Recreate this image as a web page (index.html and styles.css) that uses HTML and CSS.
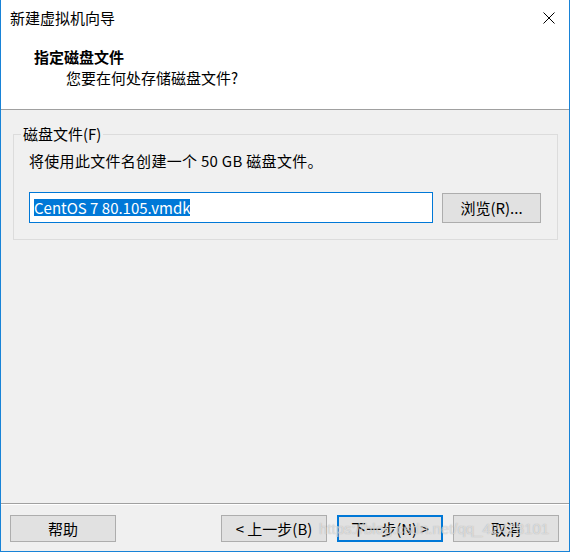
FILE: index.html
```html
<!DOCTYPE html>
<html lang="zh">
<head>
    <meta charset="UTF-8">
    <meta name="viewport" content="width=device-width, initial-scale=1.0">
    <title>新建虚拟机向导</title>
    <link rel="stylesheet" href="styles.css">
</head>
<body>
    <div class="window">
        <!-- 标题栏和页眉 -->
        <div class="header">
            <div class="titlebar">
                <span class="title">新建虚拟机向导</span>
                <button class="close-btn" title="关闭">
                    <svg width="12" height="12" viewBox="0 0 12 12">
                        <path d="M0.5 0.5 L11.5 11.5 M11.5 0.5 L0.5 11.5" stroke="#000" stroke-width="1" fill="none"/>
                    </svg>
                </button>
            </div>
            <div class="head-text">
                <div class="head-title">指定磁盘文件</div>
                <div class="head-sub">您要在何处存储磁盘文件?</div>
            </div>
        </div>

        <!-- 主体 -->
        <div class="content">
            <fieldset class="group">
                <legend>磁盘文件(F)</legend>
                <div class="hint">将使用此文件名创建一个 50 GB 磁盘文件。</div>
                <div class="file-row">
                    <div class="file-input"><span class="selected">CentOS 7 80.105.vmdk</span></div>
                    <button class="btn browse-btn">浏览(R)...</button>
                </div>
            </fieldset>
        </div>

        <!-- 底部按钮 -->
        <div class="footer">
            <button class="btn">帮助</button>
            <div class="nav-group">
                <button class="btn">&lt; 上一步(B)</button>
                <button class="btn btn-default">下一步(N) &gt;</button>
                <button class="btn">取消</button>
            </div>
        </div>

        <div class="watermark">https://blog.csdn.net/qq_42428101</div>
    </div>
</body>
</html>
```

FILE: styles.css
```css
* {
    box-sizing: border-box;
    margin: 0;
    padding: 0;
}

body {
    font-family: "Noto Sans CJK SC", "Noto Sans", sans-serif;
    font-size: 15px;
    color: #000;
    background: #f0f0f0;
}

.window {
    position: relative;
    width: 570px;
    height: 552px;
    display: flex;
    flex-direction: column;
    border: 1px solid #1883d7;
    border-top: none;
    background: #f0f0f0;
    overflow: hidden;
}

/* 页眉 */
.header {
    height: 110px;
    background: #fff;
    border-bottom: 1px solid #a0a0a0;
}

.titlebar {
    height: 36px;
    display: flex;
    align-items: center;
    justify-content: space-between;
    padding-left: 9px;
    padding-right: 14px;
}

.title {
    line-height: 20px;
}

.close-btn {
    width: 12px;
    height: 12px;
    border: none;
    background: none;
    display: flex;
}

.head-text {
    padding-top: 11px;
    line-height: 20px;
}

.head-title {
    font-weight: bold;
    padding-left: 33px;
}

.head-sub {
    padding-left: 65px;
    margin-top: 1px;
}

/* 主体 */
.content {
    flex: 1;
    padding: 14px 11px 0 12px;
}

.group {
    border: 1px solid #dcdcdc;
    padding: 7px 16px 16px 15px;
}

.group legend {
    line-height: 20px;
    padding: 0 2px;
    margin-left: -8px;
}

.hint {
    line-height: 20px;
    letter-spacing: 0.3px;
}

.file-row {
    display: flex;
    align-items: center;
    gap: 9px;
    margin-top: 21px;
}

.file-input {
    width: 404px;
    height: 31px;
    background: #fff;
    border: 1px solid #0078d7;
    padding-left: 4px;
    display: flex;
    align-items: center;
}

.selected {
    background: #0078d7;
    color: #fff;
    line-height: 17px;
}

.btn {
    width: 106px;
    height: 27px;
    background: #e1e1e1;
    border: 1px solid #adadad;
    font-family: inherit;
    font-size: 15px;
    color: #000;
}

.browse-btn {
    width: 99px;
    height: 30px;
}

.btn-default {
    border: 2px solid #0078d7;
}

/* 底部 */
.footer {
    height: 48px;
    border-top: 1px solid #a0a0a0;
    box-shadow: inset 0 1px #fff;
    display: flex;
    justify-content: space-between;
    padding: 11px 10px 0 9px;
}

.nav-group {
    display: flex;
    gap: 10px;
}

.watermark {
    position: absolute;
    left: 318px;
    top: 520px;
    font-family: "Liberation Sans", Arial, sans-serif;
    font-size: 15px;
    color: rgba(255, 255, 255, 0.55);
    text-shadow: 0 0 1px rgba(120, 120, 120, 0.6);
    white-space: nowrap;
    pointer-events: none;
}
```
